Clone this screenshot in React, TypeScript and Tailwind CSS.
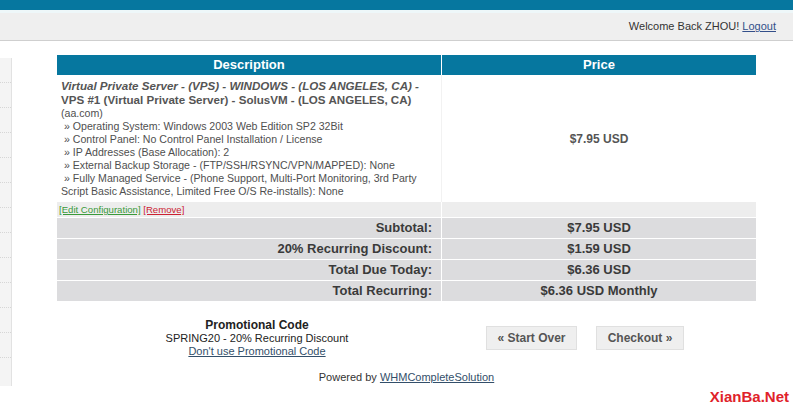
import React from "react";

const font = { fontFamily: '"Liberation Sans", Arial, sans-serif' };

const options = [
  "Operating System: Windows 2003 Web Edition SP2 32Bit",
  "Control Panel: No Control Panel Installation / License",
  "IP Addresses (Base Allocation): 2",
  "External Backup Storage - (FTP/SSH/RSYNC/VPN/MAPPED): None",
];

const totals = [
  { label: "Subtotal:", value: "$7.95 USD" },
  { label: "20% Recurring Discount:", value: "$1.59 USD" },
  { label: "Total Due Today:", value: "$6.36 USD" },
  { label: "Total Recurring:", value: "$6.36 USD Monthly" },
];

function Sidebar() {
  return (
    <div className="mt-[17px] w-[12px] border-r border-[#e2e2e2] bg-[#f4f4f4]">
      {Array.from({ length: 12 }).map((_, i) => (
        <div key={i} className="h-[25px] border-b border-dotted border-[#d6d6d6]" />
      ))}
    </div>
  );
}

function CartTable() {
  return (
    <div className="w-[699px] text-[10.6px] text-[#4f4f4f]">
      {/* header */}
      <div className="flex h-[20px] bg-[#06779f] text-[13px] font-bold text-white">
        <div className="flex w-[385px] items-center justify-center border-r border-white">Description</div>
        <div className="flex flex-1 items-center justify-center">Price</div>
      </div>

      {/* item */}
      <div className="flex bg-white">
        <div className="w-[385px] border-r border-[#f2f2f2] pb-[4px] pl-[4px] pt-[4px] leading-[13px]">
          <div className="text-[11.6px] font-bold italic leading-[14px] text-[#555]">
            Virtual Private Server - (VPS) - WINDOWS - (LOS ANGELES, CA) -
          </div>
          <div className="text-[11.6px] font-bold leading-[14px] text-[#555]">
            VPS #1 (Virtual Private Server) - SolusVM - (LOS ANGELES, CA)
          </div>
          <div>(aa.com)</div>
          {options.map((o) => (
            <div key={o}>&nbsp;» {o}</div>
          ))}
          <div>
            &nbsp;» Fully Managed Service - (Phone Support, Multi-Port Monitoring, 3rd Party Script Basic
            Assistance, Limited Free O/S Re-installs): None
          </div>
        </div>
        <div className="flex flex-1 items-center justify-center text-[12px] font-bold text-[#555]">$7.95 USD</div>
      </div>

      {/* edit row */}
      <div className="flex h-[15px] bg-[#ededed] text-[9.6px] leading-[15px]">
        <div className="w-[385px] border-r border-white pl-[2px]">
          <span className="text-[#3a9a3a] underline">[Edit Configuration]</span>{" "}
          <span className="text-[#cc2233] underline">[Remove]</span>
        </div>
        <div className="flex-1" />
      </div>

      {/* totals */}
      {totals.map((t) => (
        <div key={t.label} className="flex h-[21px] border-t border-white bg-[#dcdcde] text-[13px] font-bold text-[#3a3a3a]">
          <div className="flex w-[385px] items-center justify-end border-r border-white pr-[9px]">{t.label}</div>
          <div className="flex flex-1 items-center justify-center">{t.value}</div>
        </div>
      ))}
    </div>
  );
}

export default function App() {
  return (
    <div className="relative h-[410px] w-[793px] overflow-hidden bg-white" style={font}>
      <div className="h-[10px] bg-[#06779f]" />
      <div className="h-[3px] bg-[#eef7f9]" />
      <div className="flex h-[28px] items-center justify-end border-b border-[#cfcfcf] bg-[#efefef] pr-[17px] text-[11px] text-[#333]">
        Welcome Back ZHOU!&nbsp;<a className="text-[#334f8a] underline">Logout</a>
      </div>

      <div className="flex">
        <Sidebar />
        <div className="ml-[45px] mt-[14px]">
          <CartTable />

          <div className="mt-[18px] flex items-start">
            <div className="w-[400px] text-center text-[11px] leading-[13px] text-[#222]">
              <div className="text-[12px] font-bold">Promotional Code</div>
              <div>SPRING20 - 20% Recurring Discount</div>
              <a className="text-[#334f6a] underline">Don't use Promotional Code</a>
            </div>
            <div className="ml-[29px] mt-[7px] flex gap-[19px]">
              <button className="h-[24px] w-[91px] border border-[#e0e0e0] bg-[#efefef] text-[12px] font-bold text-[#555]">
                « Start Over
              </button>
              <button className="h-[24px] w-[88px] border border-[#e0e0e0] bg-[#efefef] text-[12px] font-bold text-[#555]">
                Checkout »
              </button>
            </div>
          </div>

          <div className="mt-[11px] w-[699px] text-center text-[11px] text-[#333]">
            Powered by <a className="text-[#334f6a] underline">WHMCompleteSolution</a>
          </div>
        </div>
      </div>

      <div className="absolute bottom-[2px] right-[4px] text-[15px] font-bold text-[#e0222a]">XianBa.Net</div>
    </div>
  );
}
